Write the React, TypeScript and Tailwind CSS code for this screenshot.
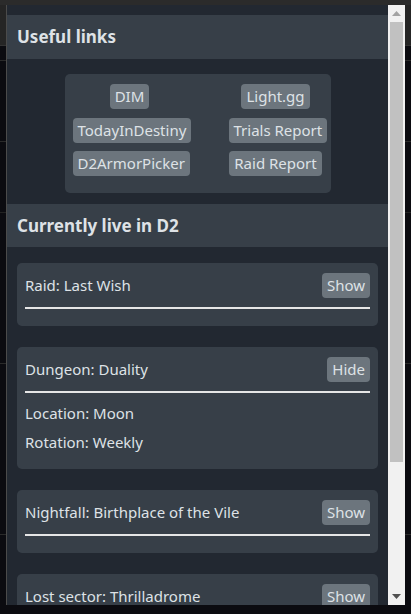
import React from "react";

const links = [
  ["DIM", "Light.gg"],
  ["TodayInDestiny", "Trials Report"],
  ["D2ArmorPicker", "Raid Report"],
];

type Activity = {
  title: string;
  open: boolean;
  details?: string[];
};

const activities: Activity[] = [
  { title: "Raid: Last Wish", open: false },
  { title: "Dungeon: Duality", open: true, details: ["Location: Moon", "Rotation: Weekly"] },
  { title: "Nightfall: Birthplace of the Vile", open: false },
  { title: "Lost sector: Thrilladrome", open: false },
];

function Btn({ children }: { children: React.ReactNode }) {
  return (
    <span className="inline-block h-[25px] whitespace-nowrap rounded-[4px] bg-[#6c757d] px-[5px] leading-[25px] text-[#dee2e6]">
      {children}
    </span>
  );
}

function ActivityCard({ a }: { a: Activity }) {
  return (
    <div className="mb-[21px] rounded-[5px] bg-[#373f48] px-2 pt-[10px] pb-[17px]">
      <div className="flex items-center justify-between">
        <span className="-mt-[2px] leading-6">{a.title}</span>
        <Btn>{a.open ? "Hide" : "Show"}</Btn>
      </div>
      <div className="mt-[9px] h-[2px] bg-[#e6e6e6]" />
      {a.open && a.details && (
        <div className="-mb-[2px] flex flex-col gap-[5px] pt-[8px]">
          {a.details.map((d) => (
            <p key={d} className="leading-6">
              {d}
            </p>
          ))}
        </div>
      )}
    </div>
  );
}

export default function App() {
  return (
    <div
      className="relative h-[614px] w-[411px] overflow-hidden bg-[#0b0b10]"
      style={{ fontFamily: '"Noto Sans", "Open Sans", sans-serif' }}
    >
      {/* page behind the popup */}
      <div className="h-[5px] bg-[#2b2b2b]" />
      <div className="h-[40px] bg-[#252525]" />
      <div className="h-px bg-[#333]" />
      <div className="mt-[14px] h-px bg-[#2a2a2a]" />
      <div className="mt-[80px] h-px bg-[#2a2a2a]" />
      <div className="mt-[70px] h-px bg-[#222]" />
      <div className="mt-[150px] h-px bg-[#2a2a2a]" />
      <div className="mt-[170px] h-px bg-[#2a2a2a]" />

      {/* popup */}
      <div className="absolute left-[6px] top-[5px] flex h-[600px] w-[399px] border-l border-[#4b4b4b] bg-[#222831]">
        <div className="h-full flex-1 overflow-hidden pt-[10px] text-[15px] text-[#dee2e6]">
          <div className="flex h-[44px] items-center bg-[#373f48] px-[10px] text-[17px] font-bold">
            Useful links
          </div>
          <div className="mx-auto mt-[15px] grid w-[266px] grid-cols-[114px_94px] justify-between gap-y-[8.5px] rounded-[5px] bg-[#373f48] px-2 pt-[10px] pb-[17px]">
            {links.map(([a, b]) => (
              <React.Fragment key={a}>
                <div className="text-center">
                  <Btn>{a}</Btn>
                </div>
                <div className="text-center">
                  <Btn>{b}</Btn>
                </div>
              </React.Fragment>
            ))}
          </div>
          <div className="mt-[11px] flex h-[43px] items-center bg-[#373f48] px-[10px] text-[17px] font-bold">
            Currently live in D2
          </div>
          <div className="px-[10px] pt-[16px]">
            {activities.map((a) => (
              <ActivityCard key={a.title} a={a} />
            ))}
          </div>
        </div>
        {/* scrollbar */}
        <div className="flex h-full w-[17px] flex-col items-center bg-[#f1f1f1]">
          <div className="flex h-[17px] items-center justify-center">
            <svg width="9" height="5" viewBox="0 0 9 5">
              <path d="M0 5 L4.5 0 L9 5 Z" fill="#a3a3a3" />
            </svg>
          </div>
          <div className="h-[440px] w-[13px] bg-[#c1c1c1]" />
          <div className="flex-1" />
          <div className="flex h-[17px] items-center justify-center">
            <svg width="9" height="5" viewBox="0 0 9 5">
              <path d="M0 0 L9 0 L4.5 5 Z" fill="#505050" />
            </svg>
          </div>
        </div>
      </div>
    </div>
  );
}
